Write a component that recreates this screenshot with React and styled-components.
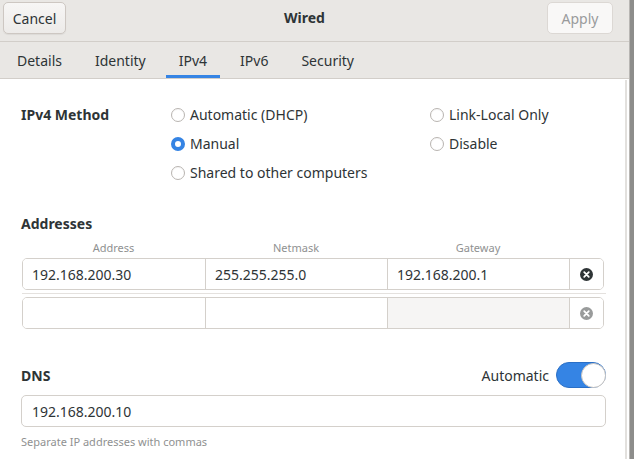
import React from "react";
import styled, { createGlobalStyle } from "styled-components";

const Global = createGlobalStyle`
  html, body { margin: 0; padding: 0; background: #ffffff; }
  body { font-family: "Noto Sans", "Open Sans", sans-serif; font-size: 14px; color: #2e3436; }
  * { box-sizing: border-box; }
`;

const Screen = styled.div`
  width: 634px;
  height: 459px;
  display: flex;
  overflow: hidden;
`;

const Window = styled.div`
  width: 629px;
  display: flex;
  flex-direction: column;
  position: relative;
  background: #ffffff;
`;

const Edge = styled.div`
  width: 5px;
  background: #8d8d8b;
  border-left: 1px solid #b8b6b3;
`;

const HeaderBar = styled.div`
  height: 42px;
  background: #e9e7e4;
  border-bottom: 1px solid #d2cec9;
  display: flex;
  align-items: flex-start;
  justify-content: space-between;
  padding: 2px 16px 0 3px;
`;

const Button = styled.button`
  height: 32px;
  width: ${(p) => p.$w}px;
  border-radius: 5px;
  border: 1px solid ${(p) => (p.disabled ? "#dcd8d4" : "#cdc7c2")};
  background: ${(p) => (p.disabled ? "#f9f8f7" : "linear-gradient(#f7f6f5, #edebe9)")};
  color: ${(p) => (p.disabled ? "#999b9c" : "#2e3436")};
  font-family: inherit;
  font-size: 14px;
  box-shadow: ${(p) => (p.disabled ? "none" : "0 1px 1px rgba(0,0,0,0.06)")};
  padding: 0;
`;

const Title = styled.div`
  font-weight: 700;
  font-size: 14px;
  line-height: 32px;
  color: #2e3436;
  margin-left: -4px;
`;

const TabBar = styled.div`
  height: 37px;
  background: #e9e7e4;
  border-bottom: 1px solid #d2cec9;
  display: flex;
  gap: 7px;
  padding-left: 4px;
`;

const Tab = styled.div`
  padding: 0 13px;
  display: flex;
  align-items: center;
  font-size: 14px;
  color: #2e3436;
  border-bottom: 3px solid ${(p) => (p.$active ? "#3584e4" : "transparent")};
  padding-top: 3px;
`;

const Content = styled.div`
  flex: 1;
  padding: 21px 24px 0 21px;
  display: flex;
  flex-direction: column;
`;

const ScrollIndicator = styled.div`
  position: absolute;
  right: 2px;
  top: 80px;
  bottom: 0;
  width: 2px;
  background: #e2e0dd;
`;

const MethodGrid = styled.div`
  display: grid;
  grid-template-columns: 150px 259px 1fr;
  grid-auto-rows: 29px;
`;

const SectionLabel = styled.div`
  font-weight: 700;
  font-size: 14px;
  display: flex;
  align-items: center;
  height: ${(p) => p.$h || 29}px;
`;

const RadioRow = styled.div`
  display: flex;
  align-items: center;
  gap: 5px;
  font-size: 14px;
  grid-column: ${(p) => p.$col};
  grid-row: ${(p) => p.$row};
`;

const RadioCircle = styled.span`
  width: 14px;
  height: 14px;
  border-radius: 50%;
  flex: none;
  border: ${(p) => (p.$on ? "4px solid #3584e4" : "1px solid #b9b5b1")};
  background: #ffffff;
  box-shadow: ${(p) => (p.$on ? "none" : "inset 0 1px 1px rgba(0,0,0,0.04)")};
`;

const AddressesTitle = styled(SectionLabel)`
  margin-top: 26px;
  height: 20px;
`;

const ColumnHeads = styled.div`
  display: grid;
  grid-template-columns: 183px 182px 182px 34px;
  margin-top: 8px;
  margin-left: 1px;
  height: 14px;
`;

const ColumnHead = styled.div`
  font-size: 11px;
  color: #8f9191;
  text-align: center;
  line-height: 14px;
`;

const AddrRow = styled.div`
  display: grid;
  grid-template-columns: 183px 182px 182px 1fr;
  width: 582px;
  height: 32px;
  margin-left: 1px;
  margin-top: ${(p) => p.$mt || 0}px;
  border: 1px solid #d4d0cb;
  border-radius: 5px;
  overflow: hidden;
`;

const Cell = styled.div`
  border-right: 1px solid #d4d0cb;
  background: ${(p) => (p.$disabled ? "#f6f5f4" : "#ffffff")};
  padding-left: 9px;
  display: flex;
  align-items: center;
  font-size: 14px;
  color: #2e3436;
`;

const RemoveCell = styled.div`
  display: flex;
  align-items: center;
  justify-content: center;
  background: #ffffff;
`;

const RowSeparator = styled.div`
  height: 1px;
  background: #e4e1de;
  margin: 3px 0 3px 1px;
  width: 584px;
`;

const DnsHead = styled.div`
  margin-top: 33px;
  height: 26px;
  display: flex;
  align-items: center;
  justify-content: space-between;
  width: 585px;
`;

const SwitchGroup = styled.div`
  display: flex;
  align-items: center;
  gap: 7px;
  font-size: 14px;
`;

const Switch = styled.div`
  width: 50px;
  height: 26px;
  border-radius: 13px;
  background: #3584e4;
  border: 1px solid #2a6fc6;
  display: flex;
  justify-content: flex-end;
  align-items: center;
  padding: 0;
`;

const Knob = styled.div`
  width: 25px;
  height: 25px;
  border-radius: 50%;
  background: #ffffff;
  border: 1px solid #c8c4c0;
  margin-right: -1px;
`;

const DnsEntry = styled.div`
  margin-top: 7px;
  width: 585px;
  height: 32px;
  border: 1px solid #d4d0cb;
  border-radius: 5px;
  display: flex;
  align-items: center;
  padding-left: 10px;
  font-size: 14px;
`;

const Helper = styled.div`
  margin-top: 8px;
  font-size: 11px;
  color: #8f9191;
  line-height: 14px;
`;

const RemoveIcon = ({ color }) => (
  <svg width="13" height="13" viewBox="0 0 16 16">
    <circle cx="8" cy="8" r="8" fill={color} />
    <path d="M5.2 5.2 L10.8 10.8 M10.8 5.2 L5.2 10.8" stroke="#ffffff" strokeWidth="2.2" strokeLinecap="round" />
  </svg>
);

export default function App() {
  return (
    <Screen>
      <Global />
      <Window>
        <HeaderBar>
          <Button $w={63}>Cancel</Button>
          <Title>Wired</Title>
          <Button $w={66} disabled>Apply</Button>
        </HeaderBar>
        <TabBar>
          <Tab>Details</Tab>
          <Tab>Identity</Tab>
          <Tab $active>IPv4</Tab>
          <Tab>IPv6</Tab>
          <Tab>Security</Tab>
        </TabBar>
        <Content>
          <MethodGrid>
            <SectionLabel>IPv4 Method</SectionLabel>
            <RadioRow $col={2} $row={1}><RadioCircle />Automatic (DHCP)</RadioRow>
            <RadioRow $col={2} $row={2}><RadioCircle $on />Manual</RadioRow>
            <RadioRow $col={2} $row={3}><RadioCircle />Shared to other computers</RadioRow>
            <RadioRow $col={3} $row={1}><RadioCircle />Link-Local Only</RadioRow>
            <RadioRow $col={3} $row={2}><RadioCircle />Disable</RadioRow>
          </MethodGrid>

          <AddressesTitle>Addresses</AddressesTitle>
          <ColumnHeads>
            <ColumnHead>Address</ColumnHead>
            <ColumnHead>Netmask</ColumnHead>
            <ColumnHead>Gateway</ColumnHead>
          </ColumnHeads>
          <AddrRow $mt={3}>
            <Cell>192.168.200.30</Cell>
            <Cell>255.255.255.0</Cell>
            <Cell>192.168.200.1</Cell>
            <RemoveCell><RemoveIcon color="#2e3436" /></RemoveCell>
          </AddrRow>
          <RowSeparator />
          <AddrRow>
            <Cell />
            <Cell />
            <Cell $disabled />
            <RemoveCell><RemoveIcon color="#999b9b" /></RemoveCell>
          </AddrRow>

          <DnsHead>
            <SectionLabel $h={26}>DNS</SectionLabel>
            <SwitchGroup>
              Automatic
              <Switch><Knob /></Switch>
            </SwitchGroup>
          </DnsHead>
          <DnsEntry>192.168.200.10</DnsEntry>
          <Helper>Separate IP addresses with commas</Helper>
        </Content>
        <ScrollIndicator />
      </Window>
      <Edge />
    </Screen>
  );
}
